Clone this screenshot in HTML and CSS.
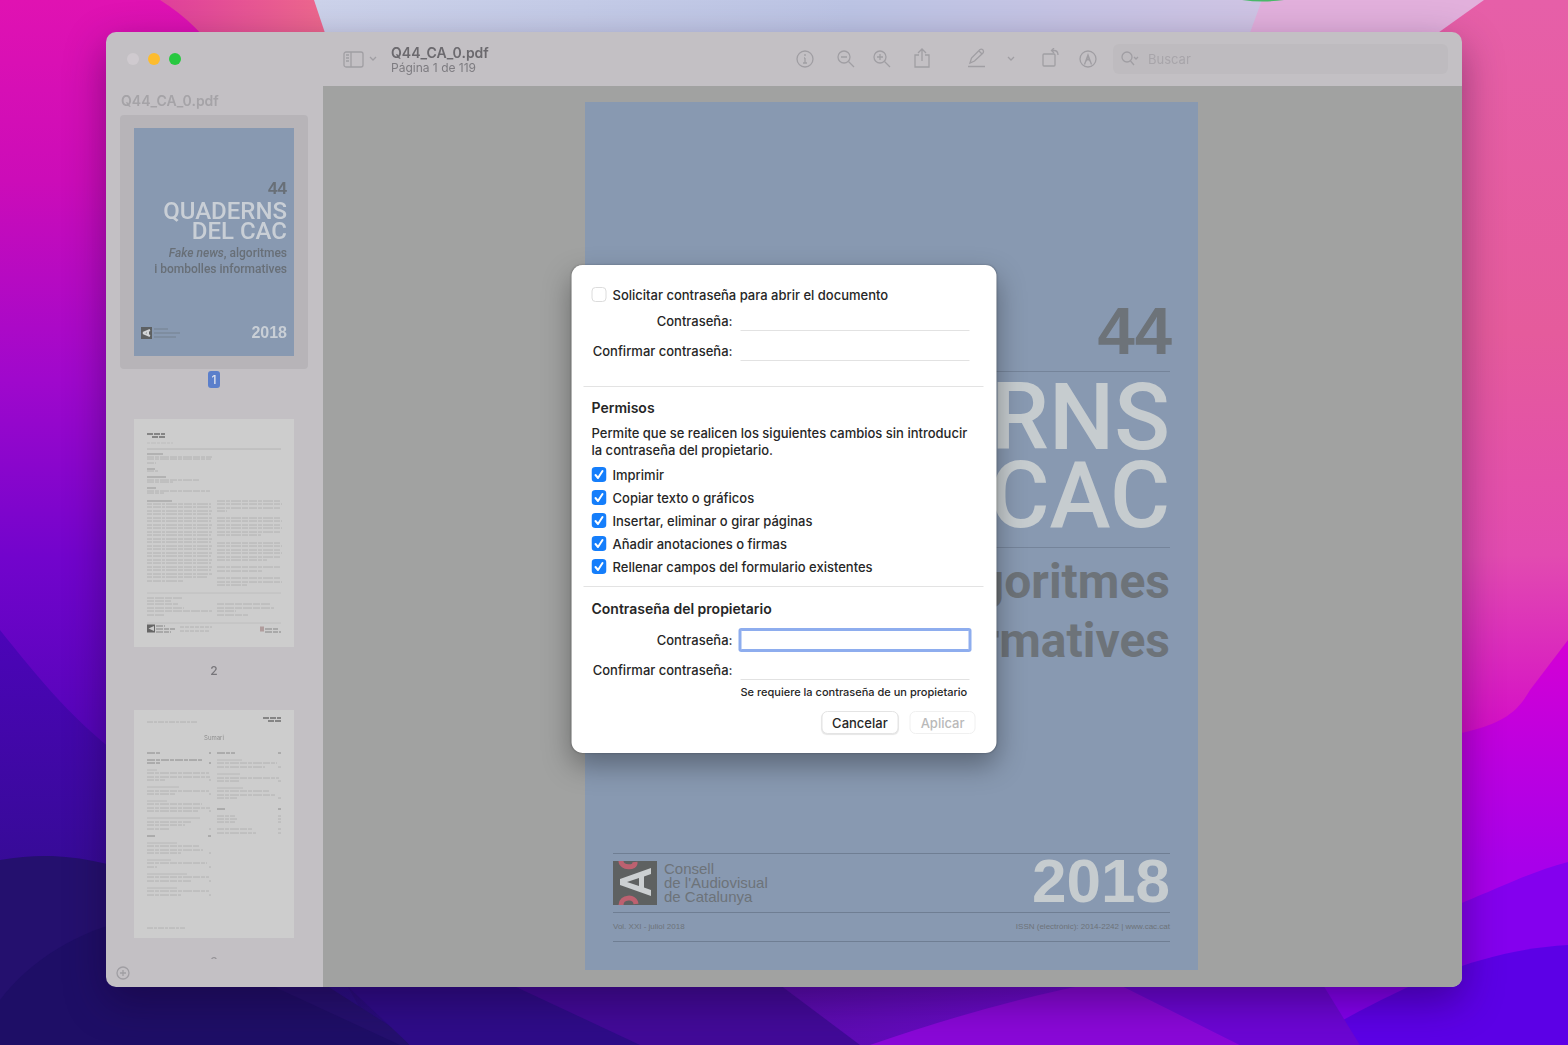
FILE: index.html
```html
<!DOCTYPE html>
<html lang="es">
<head>
<meta charset="utf-8">
<meta name="viewport" content="width=device-width, initial-scale=1">
<title>Q44_CA_0.pdf</title>
<link rel="stylesheet" href="styles.css">
</head>
<body>
<svg class="wallpaper" viewBox="0 0 1568 1045" preserveAspectRatio="none" aria-hidden="true">
  <defs>
    <linearGradient id="left" x1="0" y1="0" x2="0" y2="1"><stop offset="0" stop-color="#e012b2"/><stop offset=".2" stop-color="#cc0cb8"/><stop offset=".42" stop-color="#a008cc"/><stop offset=".62" stop-color="#7204cc"/><stop offset="1" stop-color="#3a06a8"/></linearGradient>
    <linearGradient id="dark" x1="0" y1="0" x2="0" y2="1"><stop offset="0" stop-color="#4c04b8"/><stop offset="1" stop-color="#26107e"/></linearGradient>
    <linearGradient id="sky" x1="0" y1="0" x2="1" y2="0"><stop offset="0" stop-color="#ccd2ea"/><stop offset=".45" stop-color="#bcc4e4"/><stop offset=".8" stop-color="#cfc4e4"/><stop offset="1" stop-color="#e0a8d8"/></linearGradient>
    <linearGradient id="pink" x1="0" y1="0" x2="0" y2="1"><stop offset="0" stop-color="#e65fa8"/><stop offset=".45" stop-color="#e55b9c"/><stop offset=".75" stop-color="#e24bb0"/><stop offset="1" stop-color="#d40cc8"/></linearGradient>
    <linearGradient id="magenta" x1="0" y1="0" x2="0" y2="1"><stop offset="0" stop-color="#d400d4"/><stop offset=".75" stop-color="#a800ea"/></linearGradient>
    <linearGradient id="floor" x1="0" y1="0" x2="1" y2="0"><stop offset="0" stop-color="#20106c"/><stop offset=".28" stop-color="#2a0c80"/><stop offset=".5" stop-color="#5a0cae"/><stop offset=".75" stop-color="#7408d8"/><stop offset="1" stop-color="#6000e8"/></linearGradient>
    <linearGradient id="coral" x1="0" y1="0" x2="1" y2="0"><stop offset="0" stop-color="#e0409c"/><stop offset="1" stop-color="#ee6a8c"/></linearGradient>
  </defs>
  <rect width="1568" height="1045" fill="url(#floor)"/>
  <path d="M0 0H400V900H0Z" fill="url(#left)"/>
  <path d="M0 630C40 680 80 730 140 770L300 900L380 1045H0Z" fill="url(#dark)"/>
  <path d="M0 860C60 850 100 860 160 880L420 1045H0Z" fill="#24106e"/>
  <path d="M0 1000C30 960 80 930 130 920L400 1045H0Z" fill="#1e0e66"/>
  <path d="M160 0H315L334 60H220Q200 25 160 0Z" fill="url(#coral)"/>
  <path d="M314 0H1500V60H334Z" fill="url(#sky)"/>
  <path d="M1262 0H1500V60H1240Z" fill="#e2b0dc"/>
  <path d="M1242 0H1284Q1263 3 1242 0Z" fill="#49b868"/>
  <path d="M1484 0H1568V740H1400V60Z" fill="url(#pink)"/>
  <path d="M1400 742C1500 732 1515 715 1530 690L1568 640V940H1400Z" fill="url(#magenta)"/>
  <path d="M1300 955C1460 915 1500 880 1568 862V1045H1300Z" fill="#8400ee"/>
  <path d="M1300 1045C1400 985 1480 950 1568 945V1045H1300Z" fill="#5c00e6"/>
  <path d="M340 970H760L860 1045H410Z" fill="#420a98"/>
  <path d="M330 970H480L640 1045H410Z" fill="#2e0c88"/>
  <path d="M870 1045Q1000 1000 1110 980L1240 1045Z" fill="#8a08d8"/>
  <path d="M1110 980H1320L1360 1045H1240Z" fill="#6c06d4"/>
</svg>

<main class="desktop">
<section class="window" aria-label="Q44_CA_0.pdf">
  <aside class="sidebar">
    <div class="lights"><i class="light"></i><i class="light amber"></i><i class="light green"></i></div>
    <h2 class="file-label">Q44_CA_0.pdf</h2>
    <ol class="thumbs">
      <li class="thumb selected">
        <div class="sheet cover">
          <div class="cover-top">
            <p class="issue">44</p>
            <p class="headline">QUADERNS<br>DEL CAC</p>
            <p class="subtitle"><em>Fake news</em>, algoritmes<br>i bombolles informatives</p>
          </div>
          <div class="cover-foot">
            <svg class="mini-logo" viewBox="0 0 46 14"><rect x="1" y="1" width="11" height="12" fill="#5d6062"/><path d="M3 7L10 4M3 7L10 10M8 5V9" stroke="#d3d6d8" stroke-width="2" fill="none"/><path d="M14 3H28M14 7H40M14 11H36" stroke="#74818f"/></svg>
            <p class="year">2018</p>
          </div>
        </div>
        <span class="number">1</span>
      </li>
      <li class="thumb">
        <svg class="sheet paper" viewBox="0 0 160 227" aria-label="Página 2">
          <g fill="none" stroke="#b2b2b2">
            <path stroke="#858585" stroke-width="2" stroke-dasharray="6 1" d="M13 14.500h18M18 17.500h13"/>
            <path stroke="#bdbdbd" stroke-dasharray="3 1 5 1" d="M13 23.500h26"/>
            <path stroke="#b4b4b4" d="M13 29.500h134"/>
            <path stroke="#979797" d="M13 34.500h16M13 49.500h8M13 57.500h19M13 68.500h9M13 81.500h25"/>
            <path stroke-dasharray="7 1 4 1 9 1" d="M13 37.500h65M13 39.500h64M13 43.500h9M13 51.500h11M13 60.500h52M13 62.500h26M13 71.500h63M13 73.500h17"/>
            <path stroke-dasharray="5 1 8 1 3 1 11 1" d="M13 84.500h64M13 87.500h64M13 91.500h65M13 94.500h64M13 98.500h65M13 101.500h64M13 105.500h65M13 108.500h64M13 112.500h65M13 115.500h64M13 119.500h65M13 122.500h64M13 126.500h65M13 129.500h64M13 133.500h65M13 136.500h64M13 140.500h65M13 143.500h64M13 147.500h65M13 150.500h64M13 154.500h65M13 157.500h60M13 161.500h36"/>
            <path stroke-dasharray="8 1 4 1 10 1 6 1" d="M83 81.500h64M83 84.500h65M83 88.500h64M83 91.500h10M83 98.500h64M83 101.500h65M83 105.500h64M83 108.500h65M83 112.500h64M83 115.500h44M83 123.500h64M83 126.500h65M83 130.500h64M83 133.500h65M83 137.500h64M83 140.500h50M83 147.500h64M83 151.500h45M83 158.500h64M83 162.500h65M83 165.500h30"/>
            <path stroke="#bebebe" d="M13 173.500h134M13 203.500h134"/>
            <path stroke-dasharray="7 1 9 1" d="M13 178.500h36M13 181.500h24M13 184.500h31M13 188.500h37M13 191.500h65M13 195.500h17M83 184.500h54M83 188.500h57M83 191.500h19M83 195.500h31"/>
            <path stroke="#858585" stroke-dasharray="7 1 5 1" d="M22 206.500h9M22 209.500h19M22 212.500h15M131 209.500h14M131 212.500h16"/>
            <path stroke-dasharray="4 1" d="M46 207.500h32M46 211.500h30"/>
          </g>
          <rect x="13" y="205" width="8" height="8" fill="#666"/><path d="M14.500 209L20 206.500V211.500Z" fill="#ccc"/>
          <rect x="126" y="207" width="4" height="5" fill="#b09c9c"/>
        </svg>
        <span class="number">2</span>
      </li>
      <li class="thumb">
        <svg class="sheet paper" viewBox="0 0 160 227" aria-label="Página 3">
          <text x="80" y="29" text-anchor="middle" class="paper-title">Sumari</text>
          <g fill="none" stroke="#b2b2b2">
            <path stroke="#858585" stroke-width="2" stroke-dasharray="6 1" d="M129 7.500h18M134 10.500h13"/>
            <path stroke-dasharray="6 1 3 1" d="M13 11.500h51M13 217.500h38"/>
            <path stroke="#8a8a8a" stroke-dasharray="8 1 4 1" d="M13 42.500h13M83 42.500h18M75 42.500h2M144 42.500h3M13 49.500h55M13 52.500h14M75 52.500h2M83 98.500h9M144 98.500h3M13 125.500h9M74 125.500h3"/>
            <path stroke="#b8b8b8" d="M13 59.500h10M13 76.500h32M13 90.500h20M13 107.500h53M13 132.500h30M13 149.500h24M13 163.500h40M13 177.500h30M83 49.500h25M83 63.500h23M83 77.500h26"/>
            <path stroke-dasharray="7 1 4 1 9 1" d="M13 62.500h62M13 66.500h63M13 69.500h18M13 80.500h62M13 83.500h28M13 93.500h55M13 97.500h63M13 100.500h51M13 111.500h44M13 114.500h38M13 118.500h22M13 135.500h52M13 139.500h56M13 142.500h34M13 152.500h60M13 156.500h10M13 166.500h62M13 170.500h44M13 180.500h62M13 184.500h34M83 52.500h60M83 56.500h48M83 67.500h62M83 70.500h22M83 80.500h52M83 84.500h58M83 87.500h20M83 105.500h18M83 108.500h20M83 111.500h18M83 118.500h36M83 122.500h39"/>
            <path d="M75 69.500h2M75 83.500h2M75 100.500h2M75 118.500h2M75 142.500h2M75 156.500h2M75 170.500h2M75 184.500h2M144 56.500h3M144 70.500h3M144 87.500h3M144 105.500h3M144 108.500h3M144 111.500h3M144 118.500h3M144 122.500h3"/>
          </g>
        </svg>
        <span class="number clipped">3</span>
      </li>
    </ol>
    <footer class="sidebar-foot">
      <button class="icon" type="button" aria-label="Añadir"><svg width="14" height="14" viewBox="0 0 14 14"><circle cx="7" cy="7" r="6"/><path d="M7 4V10M4 7H10"/></svg></button>
    </footer>
  </aside>

  <div class="main">
    <header class="toolbar">
      <button class="icon split" type="button" aria-label="Barra lateral"><svg width="21" height="17" viewBox="0 0 21 17"><rect x="1" y="1" width="19" height="15" rx="2"/><path d="M8 1V16M3 4H6M3 7H6M3 10H6"/></svg><svg width="8" height="6" viewBox="0 0 8 6"><path d="M1 1L4 4L7 1"/></svg></button>
      <div class="titles"><h1>Q44_CA_0.pdf</h1><p>Página 1 de 119</p></div>
      <div class="tools">
        <button class="icon" type="button" aria-label="Información"><svg width="20" height="20" viewBox="0 0 20 20"><circle cx="10" cy="10" r="8"/><path d="M10 9V14M9 9H10M8 14H12M10 5V7"/></svg></button>
        <button class="icon zoom-out" type="button" aria-label="Reducir"><svg width="20" height="20" viewBox="0 0 20 20"><circle cx="8" cy="8" r="6"/><path d="M12.500 12.500L18 18M5 8H11"/></svg></button>
        <button class="icon zoom-in" type="button" aria-label="Ampliar"><svg width="20" height="20" viewBox="0 0 20 20"><circle cx="8" cy="8" r="6"/><path d="M12.500 12.500L18 18M5 8H11M8 5V11"/></svg></button>
        <button class="icon share" type="button" aria-label="Compartir"><svg width="20" height="22" viewBox="0 0 20 22"><path d="M7 7H3V19H17V7H13M10 13V1M6 5L10 1L14 5"/></svg></button>
        <button class="icon pen" type="button" aria-label="Resaltar"><svg width="20" height="22" viewBox="0 0 20 22"><path d="M4 15L5.500 10L14 1.500Q15.500 .5 17 2Q18 3.500 17 5L8.500 13ZM13 3L16 6M2 18.500H19"/></svg></button>
        <button class="icon caret" type="button" aria-label="Opciones de resaltado"><svg width="8" height="6" viewBox="0 0 8 6"><path d="M1 1L4 4L7 1"/></svg></button>
        <button class="icon rotate" type="button" aria-label="Girar"><svg width="20" height="22" viewBox="0 0 20 22"><rect x="3" y="6" width="12" height="12" rx="1"/><path d="M12 2.500H14Q18 2.500 18 7M14 0L11.500 2.500L14 5"/></svg></button>
        <button class="icon" type="button" aria-label="Marcación"><svg width="20" height="20" viewBox="0 0 20 20"><circle cx="10" cy="10" r="8"/><path d="M6.500 15.500L10 6L13.500 15.500M8 12L10 10L12 12M10 6V9"/></svg></button>
      </div>
      <label class="search"><svg width="20" height="16" viewBox="0 0 20 16"><circle cx="7" cy="6" r="5"/><path d="M10.500 10L14 14M14 6L16 8L18 6"/></svg><input type="search" placeholder="Buscar" aria-label="Buscar"></label>
    </header>

    <div class="viewer">
      <article class="page">
        <div class="page-head">
          <p class="issue">44</p>
          <p class="headline">QUADERNS<br>DEL CAC</p>
          <p class="subtitle"><em>Fake news</em>, algoritmes<br>i bombolles informatives</p>
        </div>
        <div class="page-foot">
          <div class="brand">
            <svg class="logo" width="44" height="44" viewBox="0 0 44 44" aria-label="CAC"><rect width="44" height="44" fill="#5e6161"/><path d="M8 0C8 7 23 8 22 1M8 44C8 36 22 34 23 43" fill="none" stroke="#bd6170" stroke-width="5"/><path d="M7 22V18L38 7V13L31 15.500V26.500L38 29V35L7 24ZM14 21L26 25V17Z" fill="#ccd0d2" fill-rule="evenodd"/></svg>
            <p>Consell<br>de l'Audiovisual<br>de Catalunya</p>
            <p class="year">2018</p>
          </div>
          <div class="imprint"><span>Vol. XXI - juliol 2018</span><span>ISSN (electrònic): 2014-2242 | www.cac.cat</span></div>
        </div>
      </article>
    </div>
  </div>

  <form class="dialog" role="dialog" aria-label="Permisos">
    <label class="check"><input type="checkbox">Solicitar contraseña para abrir el documento</label>
    <div class="field"><label for="open-pass">Contraseña:</label><input id="open-pass" type="password"></div>
    <div class="field"><label for="open-confirm">Confirmar contraseña:</label><input id="open-confirm" type="password"></div>
    <hr class="after-fields">
    <h2>Permisos</h2>
    <p class="note">Permite que se realicen los siguientes cambios sin introducir la contraseña del propietario.</p>
    <label class="check"><input type="checkbox" checked>Imprimir</label>
    <label class="check"><input type="checkbox" checked>Copiar texto o gráficos</label>
    <label class="check"><input type="checkbox" checked>Insertar, eliminar o girar páginas</label>
    <label class="check"><input type="checkbox" checked>Añadir anotaciones o firmas</label>
    <label class="check"><input type="checkbox" checked>Rellenar campos del formulario existentes</label>
    <hr>
    <h2>Contraseña del propietario</h2>
    <div class="owner">
      <div class="field"><label for="owner-pass">Contraseña:</label><input id="owner-pass" class="focused" type="password"></div>
      <div class="field"><label for="owner-confirm">Confirmar contraseña:</label><input id="owner-confirm" type="password"></div>
    </div>
    <p class="hint">Se requiere la contraseña de un propietario</p>
    <div class="actions"><button type="button">Cancelar</button><button type="submit" disabled>Aplicar</button></div>
  </form>
</section>
</main>
</body>
</html>
```
FILE: styles.css
```css
* { box-sizing: border-box; }
body { margin: 0; font-family: Inter, "Liberation Sans", sans-serif; font-size: 13px; background: #3a0a9a; }
h1, h2, p, ol { margin: 0; padding: 0; }
button, input { font: inherit; color: inherit; }

.wallpaper { position: fixed; inset: 0; width: 100%; height: 100%; z-index: -1; }
.desktop { display: flex; min-height: 100vh; padding: 32px 106px 58px; filter: drop-shadow(0 14px 20px rgba(20, 0, 40, .4)); }
.window {
  position: relative; display: flex; flex: 1; min-width: 0; overflow: clip;
  border-radius: 10px; background: #c3c0c4; color: #77757a;
}

/* Sidebar */
.sidebar { display: flex; flex-direction: column; flex: 0 0 217px; padding: 0 15px 0 14px; }
.lights { display: flex; gap: 9px; padding: 21px 0 0 7px; height: 62px; }
.light { width: 12px; height: 12px; border-radius: 50%; background: #cfcacf; }
.amber { background: #fdbc2e; }
.green { background: #28c840; }
.file-label { font-size: 14px; line-height: 16px; font-weight: 600; color: #a5a3a7; margin: -1px 0 6px 1px; }
.thumbs { list-style: none; flex: 1; display: flex; flex-direction: column; gap: 18px; }
.thumb { display: flex; flex-direction: column; align-items: center; gap: 2px; }
.sheet { width: 188px; height: 254px; border: 14px solid transparent; border-width: 13px 14px; border-radius: 4px; background-clip: padding-box; }
.selected .sheet { border-color: #b7b4b8; }
.paper { background-color: #cdcdcd; }
.paper-title { font-size: 6px; fill: #8f8f8f; }
.number { font-size: 12px; line-height: 17px; padding: 0 4px; border-radius: 3px; font-weight: 500; }
.selected .number { background: #5b7fcb; color: #dfe3ee; }
.clipped { height: 6px; overflow: hidden; opacity: .6; }
.sidebar-foot { display: flex; height: 28px; margin-left: -4px; }

.cover, .page { font-family: Roboto, "Liberation Sans", sans-serif; font-weight: 700; background-color: #8899b1; color: #686f77; }
.issue, .year { font-family: "Liberation Sans", sans-serif; }
.cover { display: flex; flex-direction: column; justify-content: space-between; padding: 51px 7px 13px 6px; text-align: right; }
.cover .issue { font-size: 17px; line-height: 20px; }
.cover .headline { font-size: 24px; line-height: 20px; padding-top: 2px; color: #c9cfd6; font-weight: 500; }
.cover .subtitle { font-size: 12px; line-height: 16px; margin-top: 4px; white-space: nowrap; font-weight: 500; }
.cover-foot { display: flex; justify-content: space-between; align-items: center; }
.mini-logo { width: 46px; height: 14px; }
.cover .year { font-size: 16px; line-height: 20px; color: #c9cfd6; }

/* Toolbar */
.main { flex: 1; min-width: 0; display: flex; flex-direction: column; }
.toolbar { display: flex; align-items: center; height: 54px; padding: 0 14px 0 20px; }
.icon { display: flex; align-items: center; padding: 0; border: 0; background: none; }
.icon svg, .search svg { fill: none; stroke: #a09ea3; stroke-width: 1.300; }
.split { gap: 5px; }
.titles { margin-left: 14px; white-space: nowrap; }
.titles h1 { font-size: 14px; line-height: 17px; font-weight: 600; color: #6b696e; }
.titles p { font-size: 12px; line-height: 14px; color: #7d7b80; }
.tools { display: flex; align-items: center; margin-left: auto; }
.zoom-out { margin-left: 21px; }
.zoom-in, .rotate + .icon { margin-left: 16px; }
.share { margin-left: 20px; }
.pen { margin-left: 34px; }
.caret { margin-left: 21px; }
.rotate { margin-left: 25px; margin-right: 2px; }
.search { display: flex; align-items: center; gap: 8px; width: 335px; height: 30px; margin-left: 15px; padding: 0 7px; border-radius: 6px; background: #bebbbf; }
.search input { flex: 1; min-width: 0; padding: 0; border: 0; outline: 0; background: none; font-size: 13px; }
.search input::placeholder { color: #a8a5aa; opacity: 1; }

/* Document */
.viewer { flex: 1; display: flex; justify-content: center; padding: 16px 2px 17px 0; background: #a1a2a1; }
.page { display: flex; flex-direction: column; justify-content: space-between; width: 613px; min-height: 868px; padding: 194px 28px 28px; color: #6d7379; }
.page-head { text-align: right; }
.page .issue { font-size: 67px; line-height: 69px; padding-bottom: 6px; margin-right: -2px; }
.page .headline { font-size: 92px; line-height: 78px; padding: 7px 0 12px; color: #c6cccf; border: solid #75849a; border-width: 1px 0; white-space: nowrap; font-weight: 500; }
.page .subtitle { font-size: 48px; line-height: 59px; padding-top: 4px; white-space: nowrap; }
.brand { display: flex; align-items: center; gap: 7px; height: 60px; border: solid #6f7e93; border-width: 1px 0; font: 15px/14px "Liberation Sans", sans-serif; }
.brand .year { margin-left: auto; font-size: 62px; line-height: 58px; padding-bottom: 4px; font-weight: 700; color: #c6cccf; }
.imprint { display: flex; justify-content: space-between; height: 29px; border-bottom: 1px solid #6f7e93; font: 8px/28px "Liberation Sans", sans-serif; }

/* Password sheet */
.dialog {
  position: absolute; top: 233px; left: 50%; width: 425px; transform: translateX(-50%);
  padding: 18px 21px 19px 20px; border-radius: 11px; background: #fff; color: #262626; font-weight: 450;
  box-shadow: 0 12px 28px rgba(0, 0, 0, .34), 0 0 2px rgba(0, 0, 0, .3);
}
.check { display: flex; align-items: center; gap: 6px; height: 23px; }
.check input {
  appearance: none; width: 15px; height: 15px; margin: 0; border-radius: 4px;
  border: 1px solid #dcdcdc; background: #fff;
}
.check input:checked {
  border: 0;
  background: #157efb url("data:image/svg+xml,%3Csvg xmlns='http://www.w3.org/2000/svg' viewBox='0 0 15 15'%3E%3Cpath d='M4 8L6.500 11L11 4' fill='none' stroke='white' stroke-width='2' stroke-linecap='round' stroke-linejoin='round'/%3E%3C/svg%3E") center / contain;
}
.field { display: grid; grid-template-columns: 141px 229px; column-gap: 8px; align-items: center; height: 30px; }
.field label { text-align: right; white-space: nowrap; }
.field input { height: 20px; padding: 0 4px; border: 0; border-bottom: 1px solid #e2e2e2; outline: 0; background: #fff; }
.field .focused { border: 1px solid #8eadee; box-shadow: 0 0 0 2px #8eadee; border-radius: 1px; }
.dialog hr { height: 1px; margin: 8px -8px 12px; border: 0; background: #e3e3e3; }
.dialog .after-fields { margin-top: 20px; margin-bottom: 11px; }
.dialog h2 { font-size: 14px; line-height: 20px; font-weight: 600; }
.note { margin: 7px 0 4px; line-height: 17px; }
.owner { margin-top: 6px; }
.hint { margin-left: 149px; font-size: 11px; line-height: 14px; font-weight: 500; white-space: nowrap; }
.actions { display: flex; justify-content: flex-end; gap: 11px; margin-top: 12px; }
.actions button { height: 23px; padding: 0 10px; border: 1px solid #e4e4e4; border-radius: 6px; background: #fff; box-shadow: 0 1px 1px rgba(0, 0, 0, .1); }
.actions button:disabled { color: #b9b9b9; border-color: #f0f0f0; box-shadow: none; }
```
